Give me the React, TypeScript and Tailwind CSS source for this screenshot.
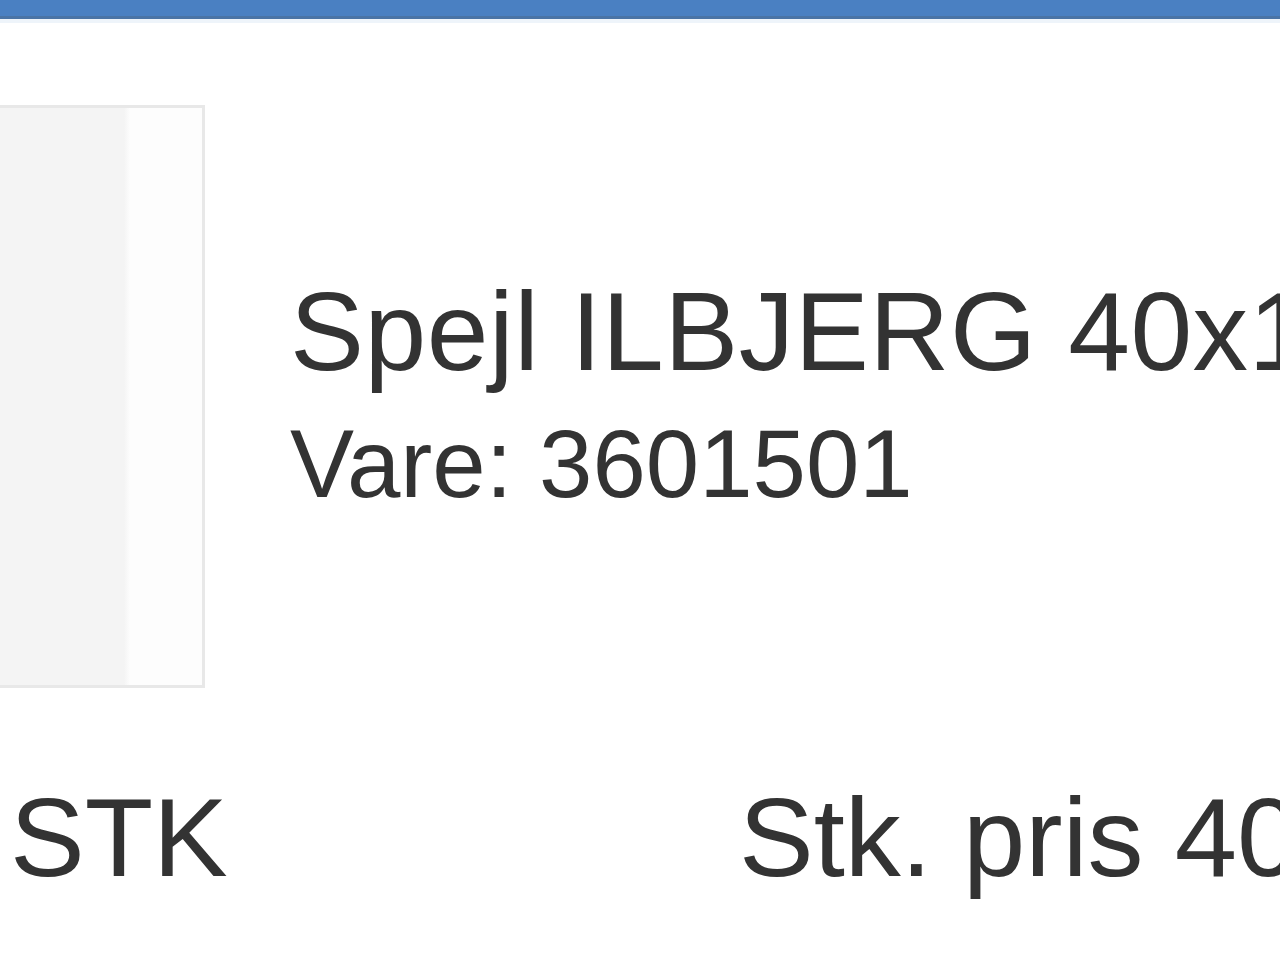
export default function App() {
  return (
    <div
      className="relative w-[1280px] h-[960px] overflow-hidden bg-white text-[#333333]"
      style={{ fontFamily: '"Liberation Sans", Arial, Helvetica, sans-serif' }}
    >
      {/* header bar */}
      <div className="h-[16px] bg-[#4a80c2]" />
      <div className="h-[3px] bg-[#4a74a6]" />
      <div className="h-[4px] bg-[#eef4fa]" />

      {/* product row */}
      <div className="flex mt-[82px]">
        <div className="ml-[-395px] w-[600px] h-[583px] shrink-0 border-[3px] border-[#e8e8e8] flex">
          <div className="flex-1 bg-[#f4f4f4]" />
          <div className="w-[6px] bg-gradient-to-r from-[#f4f4f4] to-[#fdfdfd]" />
          <div className="w-[72px] bg-[#fdfdfd]" />
        </div>
        <div className="ml-[85px] pt-[164px] whitespace-nowrap">
          <div className="text-[111px] leading-[126px] tracking-[0.5px]">Spejl ILBJERG 40x120 cm</div>
          <div className="text-[96px] leading-[110px] mt-[14px]">Vare: 3601501</div>
        </div>
      </div>

      {/* unit and price row */}
      <div className="flex mt-[94px] whitespace-nowrap text-[112px] leading-[112px]">
        <div className="w-[739px] shrink-0 pl-[10px]">STK</div>
        <div>Stk. pris 400,00</div>
      </div>
    </div>
  );
}
